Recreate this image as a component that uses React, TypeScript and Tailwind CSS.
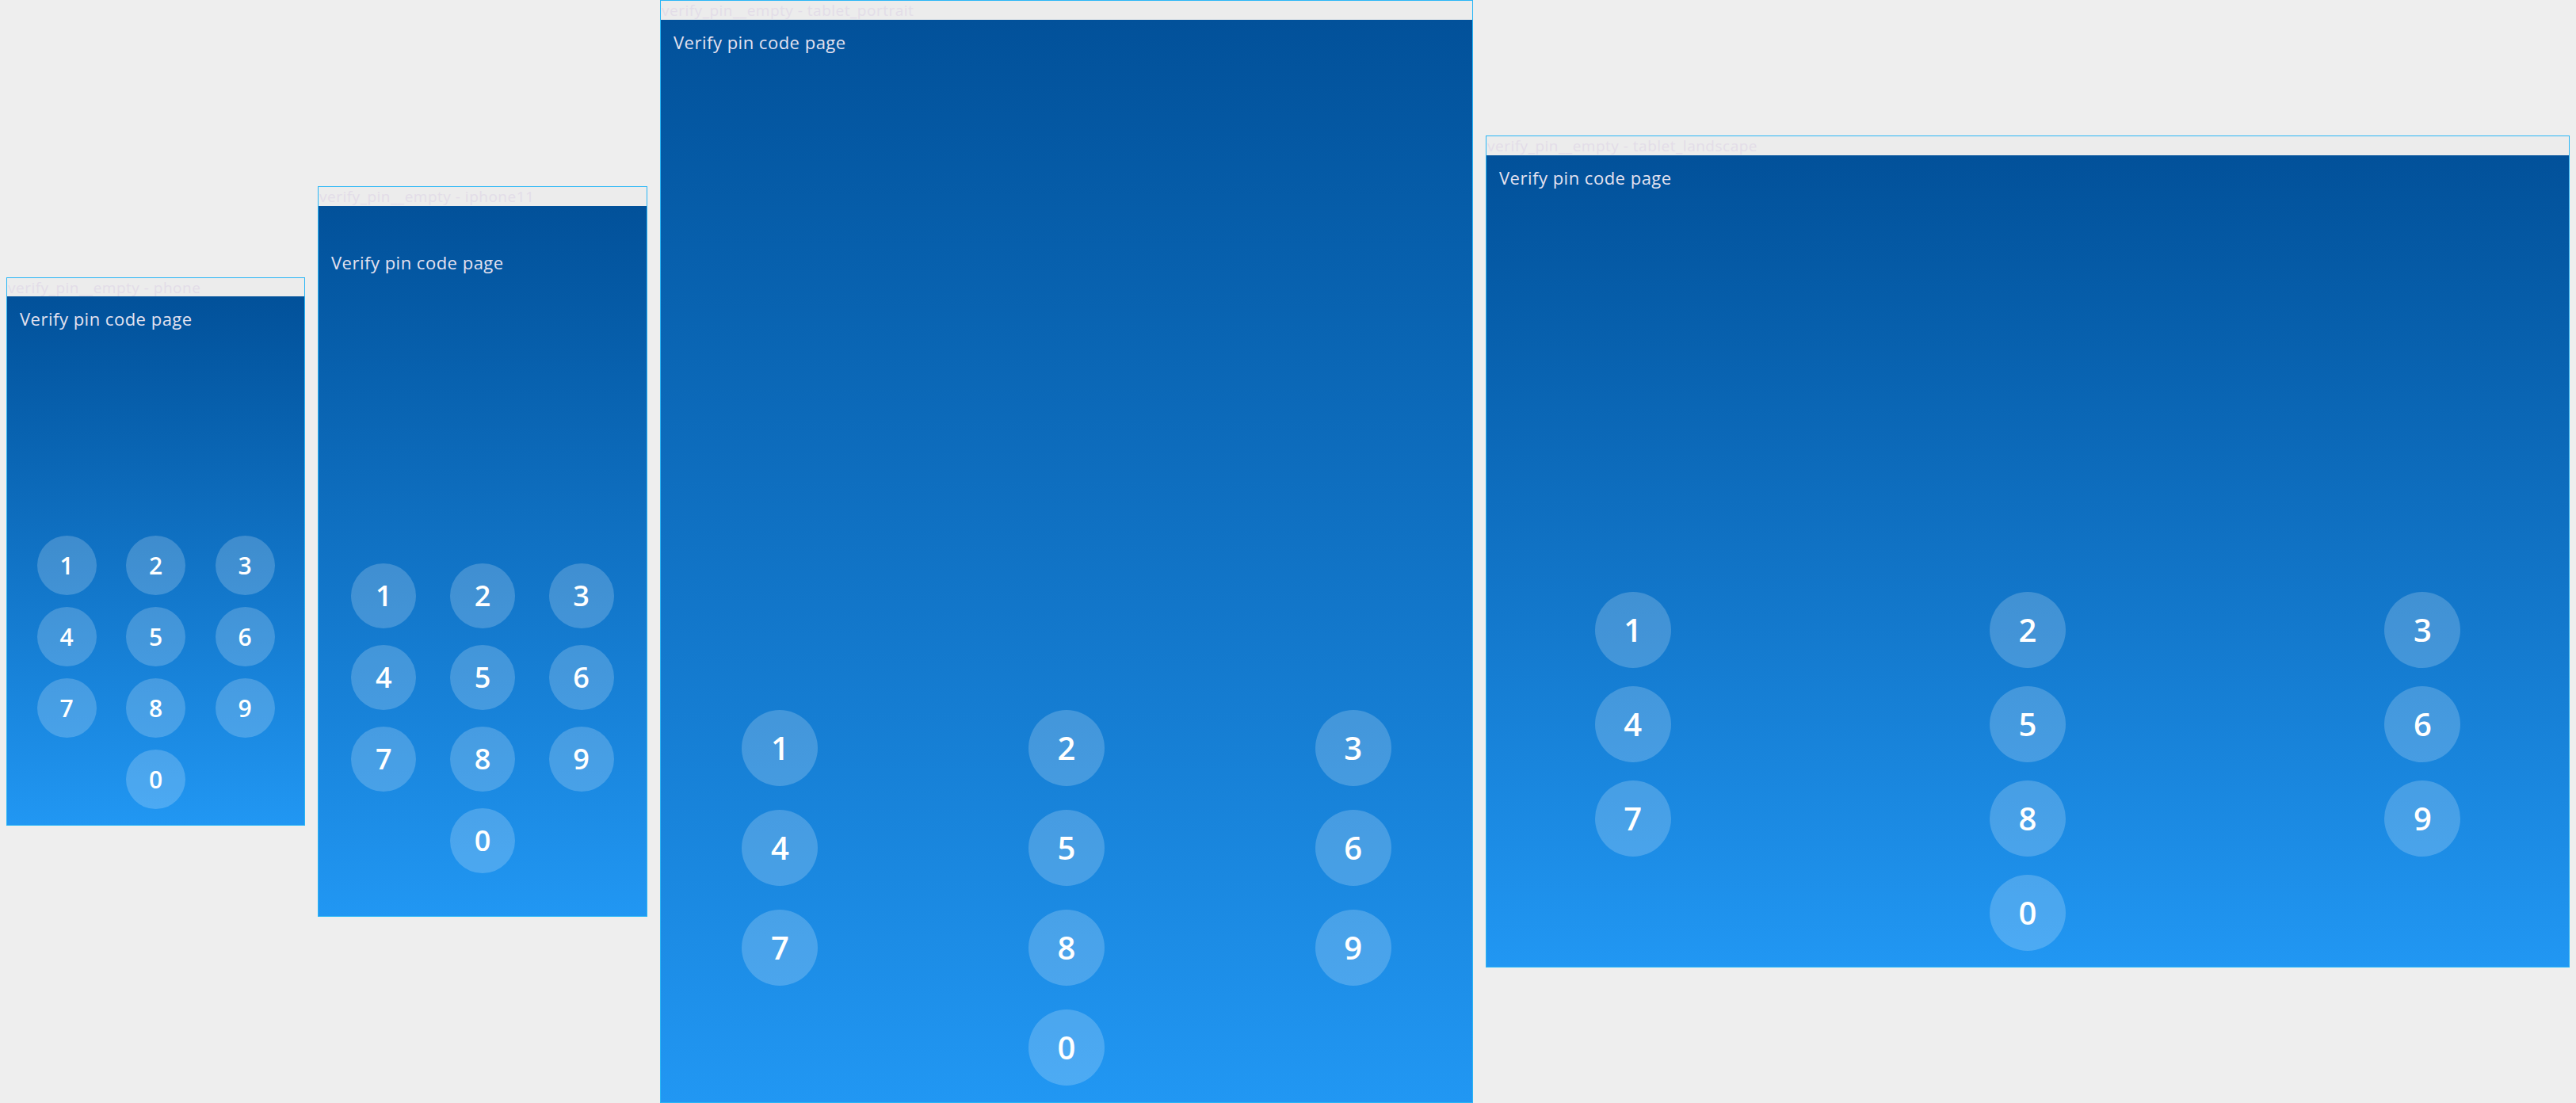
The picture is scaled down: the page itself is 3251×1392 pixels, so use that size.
import React from "react";

type FrameSpec = {
  label: string;
  frame: string;
  bar: string;
  title: string;
  pad: string;
  rows: string;
  key: string;
  digit: string;
};

const frames: FrameSpec[] = [
  {
    label: "verify_pin__empty - phone",
    frame: "w-[377px]",
    bar: "h-[23px]",
    title: "pt-[13px]",
    pad: "h-[667px] pb-[20px]",
    rows: "gap-y-[15px]",
    key: "size-[75px]",
    digit: "text-[30px]",
  },
  {
    label: "verify_pin__empty - iphone11",
    frame: "w-[416px]",
    bar: "h-[24px]",
    title: "pt-[56px]",
    pad: "h-[896px] pb-[54px]",
    rows: "gap-y-[21px]",
    key: "size-[82px]",
    digit: "text-[36px]",
  },
  {
    label: "verify_pin__empty - tablet_portrait",
    frame: "w-[1026px]",
    bar: "h-[24px]",
    title: "pt-[13px]",
    pad: "h-[1366px] pb-[21px]",
    rows: "gap-y-[30px]",
    key: "size-24",
    digit: "text-[40px]",
  },
  {
    label: "verify_pin__empty - tablet_landscape",
    frame: "w-[1368px]",
    bar: "h-[24px]",
    title: "pt-[13px]",
    pad: "h-[1024px] pb-[20px]",
    rows: "gap-y-[23px]",
    key: "size-24",
    digit: "text-[40px]",
  },
];

const keyRows = [
  ["1", "2", "3"],
  ["4", "5", "6"],
  ["7", "8", "9"],
  ["", "0", ""],
];

function PinKey({ value, spec }: { value: string; spec: FrameSpec }) {
  if (!value) return <div className={spec.key} />;
  return (
    <button
      className={`${spec.key} ${spec.digit} flex items-center justify-center rounded-full bg-white/20 font-semibold leading-none text-white`}
    >
      {value}
    </button>
  );
}

function DeviceFrame({ spec }: { spec: FrameSpec }) {
  return (
    <div className={`${spec.frame} shrink-0 border border-[#29b6f6] bg-[#ececec]`}>
      {/* frame name, cut off at the bottom like in the design tool */}
      <div
        className={`${spec.bar} overflow-hidden whitespace-nowrap pl-[1px] pt-[3px] text-[19px] leading-[18px] tracking-[0.5px] text-[#e3dde8]`}
      >
        {spec.label}
      </div>

      <div
        className={`${spec.pad} flex flex-col bg-linear-to-b from-[#02519a] to-[#2197f3]`}
      >
        <p className={`${spec.title} px-4 text-[22px] leading-[30px] tracking-[0.5px] text-[#e4e2f0]`}>
          Verify pin code page
        </p>

        <div className="flex-1" />

        {/* Keypad */}
        <div className={`${spec.rows} flex flex-col px-[10%]`}>
          {keyRows.map((row, i) => (
            <div key={i} className="flex justify-between">
              {row.map((v, j) => (
                <PinKey key={j} value={v} spec={spec} />
              ))}
            </div>
          ))}
        </div>
      </div>
    </div>
  );
}

export default function App() {
  return (
    <div
      className="flex h-[1392px] w-[3251px] items-center gap-4 overflow-hidden bg-[#eeeeee] px-2"
      style={{ fontFamily: '"Open Sans", "Liberation Sans", sans-serif' }}
    >
      {frames.map((f) => (
        <DeviceFrame key={f.label} spec={f} />
      ))}
    </div>
  );
}
